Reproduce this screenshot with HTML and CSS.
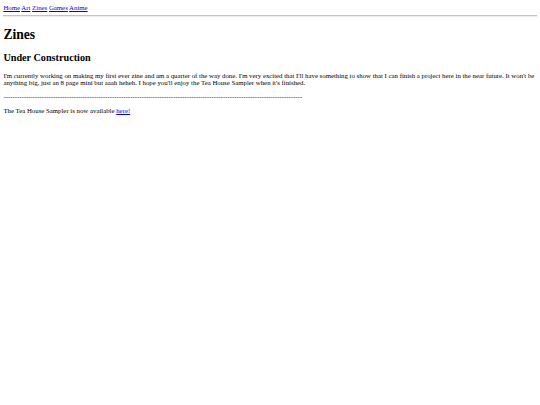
FILE: index.html
```html
<!DOCTYPE html>
<html>
<head>
<meta charset="utf-8">
<title>Zines</title>
<link rel="stylesheet" href="styles.css">
</head>
<body>
<nav class="nav"><a href="#">Home</a> <a href="#">Art</a> <a href="#">Zines</a> <a href="#">Games</a> <a href="#">Anime</a></nav>
<hr class="rule">
<h1 class="title">Zines</h1>
<h2 class="subtitle">Under Construction</h2>
<p class="text">I'm currently working on making my first ever zine and am a quarter of the way done. I'm very excited that I'll have something to show that I can finish a project here in the near future. It won't be anything big, just an 8 page mini but aaah heheh. I hope you'll enjoy the Tea House Sampler when it's finished.</p>
<p class="text">------------------------------------------------------------------------------------------------------------------------------------</p>
<p class="text">The Tea House Sampler is now available <a href="#">here!</a></p>
</body>
</html>
```
FILE: styles.css
```css
html { background: #fff; }
body {
  margin: 4.3px 3.375px 3.5px;
  font-family: "Liberation Serif", "Times New Roman", serif;
  font-size: 6.8px;
  color: #000;
}
a { color: #0000ee; }
.nav { display: block; }
.rule {
  margin: 4px 0 3.8px;
  border: 0;
  border-top: 1px solid #c4c4c4;
  border-bottom: 1px solid #ebebeb;
}
.title { font-size: 2em; margin: 0.69em 0; }
.subtitle { font-size: 1.5em; margin: 0.855em 0; }
.text { margin: 1.03em 0; }
```
